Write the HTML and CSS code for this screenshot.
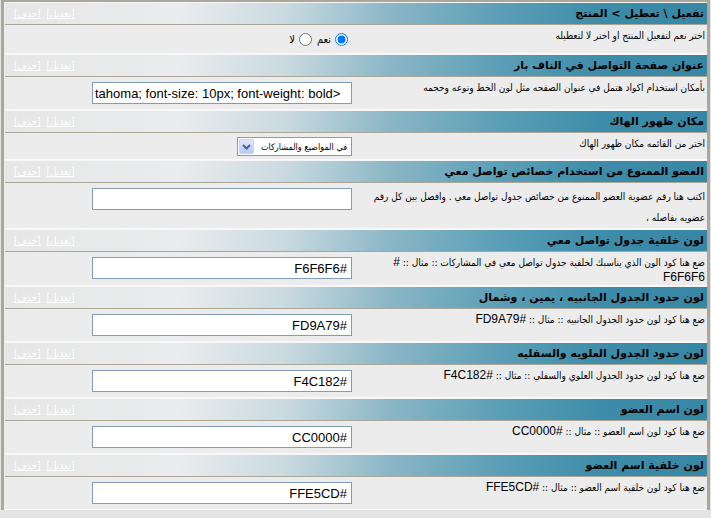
FILE: index.html
```html
<!DOCTYPE html>
<html dir="rtl">
<head>
  <meta charset="UTF-8">
  <title>إعدادات تواصل معي</title>
  <link rel="stylesheet" href="styles.css">
</head>
<body>
  <div class="panel">

    <div class="head">
      <span class="title">تفعيل \ تعطيل &gt; المنتج</span>
      <span class="tools"><a href="#">[تعديل]</a> <a href="#">[حذف]</a></span>
    </div>
    <div class="row">
      <div class="desc">اختر نعم لتفعيل المنتج او اختر لا لتعطيله</div>
      <div class="ctrl radios">
        <label class="opt"><input type="radio" name="on" checked> نعم</label>
        <label class="opt"><input type="radio" name="on"> لا</label>
      </div>
    </div>

    <div class="head">
      <span class="title">عنوان صفحة التواصل في الناف بار</span>
      <span class="tools"><a href="#">[تعديل]</a> <a href="#">[حذف]</a></span>
    </div>
    <div class="row">
      <div class="desc">بأمكان استخدام اكواد هتمل في عنوان الصفحه مثل لون الخط ونوعه وحجمه</div>
      <div class="ctrl"><input class="field ltr" type="text" value="tahoma; font-size: 10px; font-weight: bold&gt;"></div>
    </div>

    <div class="head">
      <span class="title">مكان ظهور الهاك</span>
      <span class="tools"><a href="#">[تعديل]</a> <a href="#">[حذف]</a></span>
    </div>
    <div class="row">
      <div class="desc">اختر من القائمه مكان ظهور الهاك</div>
      <div class="ctrl sel">
        <div class="select">
          <span class="sel-text">في المواضيع والمشاركات</span>
          <span class="sel-btn">
            <svg width="9" height="6" viewBox="0 0 9 6"><path d="M1 1 L4.5 4.5 L8 1" fill="none" stroke="#4d6185" stroke-width="2"/></svg>
          </span>
        </div>
      </div>
    </div>

    <div class="head">
      <span class="title">العضو الممنوع من استخدام خصائص تواصل معي</span>
      <span class="tools"><a href="#">[تعديل]</a> <a href="#">[حذف]</a></span>
    </div>
    <div class="row">
      <div class="desc tall">اكتب هنا رقم عضوية العضو الممنوع من خصائص جدول تواصل معي . وافصل بين كل رقم<br>عضويه بفاصله ،</div>
      <div class="ctrl"><input class="field" type="text" value=""></div>
    </div>

    <div class="head">
      <span class="title">لون خلفية جدول تواصل معي</span>
      <span class="tools"><a href="#">[تعديل]</a> <a href="#">[حذف]</a></span>
    </div>
    <div class="row">
      <div class="desc">ضع هنا كود الون الذي يناسبك لخلفية جدول تواصل معي في المشاركات :: مثال :: <span class="code">#</span><br><span class="code">F6F6F6</span></div>
      <div class="ctrl"><input class="field" type="text" value="#F6F6F6"></div>
    </div>

    <div class="head">
      <span class="title">لون حدود الجدول الجانبيه ، يمين ، وشمال</span>
      <span class="tools"><a href="#">[تعديل]</a> <a href="#">[حذف]</a></span>
    </div>
    <div class="row">
      <div class="desc">ضع هنا كود لون حدود الجدول الجانبيه :: مثال :: <span class="code">#FD9A79</span></div>
      <div class="ctrl"><input class="field" type="text" value="#FD9A79"></div>
    </div>

    <div class="head">
      <span class="title">لون حدود الجدول العلويه والسفليه</span>
      <span class="tools"><a href="#">[تعديل]</a> <a href="#">[حذف]</a></span>
    </div>
    <div class="row">
      <div class="desc">ضع هنا كود لون حدود الجدول العلوي والسفلي :: مثال :: <span class="code">#F4C182</span></div>
      <div class="ctrl"><input class="field" type="text" value="#F4C182"></div>
    </div>

    <div class="head">
      <span class="title">لون اسم العضو</span>
      <span class="tools"><a href="#">[تعديل]</a> <a href="#">[حذف]</a></span>
    </div>
    <div class="row">
      <div class="desc">ضع هنا كود لون اسم العضو :: مثال :: <span class="code">#CC0000</span></div>
      <div class="ctrl"><input class="field" type="text" value="#CC0000"></div>
    </div>

    <div class="head">
      <span class="title">لون خلفية اسم العضو</span>
      <span class="tools"><a href="#">[تعديل]</a> <a href="#">[حذف]</a></span>
    </div>
    <div class="row">
      <div class="desc">ضع هنا كود لون خلفية اسم العضو :: مثال :: <span class="code">#FFE5CD</span></div>
      <div class="ctrl"><input class="field" type="text" value="#FFE5CD"></div>
    </div>

  </div>
</body>
</html>
```

FILE: styles.css
```css
body {
  margin: 0;
  padding: 0;
  background: #e4e4e4;
  font-family: "DejaVu Sans Condensed", "DejaVu Sans", sans-serif;
}
.panel {
  margin: 0 1px;
  border-left: 3px solid #aaa79b;
  border-right: 3px solid #aaa79b;
  border-top: 2px solid #aaa79b;
  background: #ececec;
}
.head {
  display: flex;
  justify-content: space-between;
  align-items: center;
  height: 21px;
  padding: 0 3px 0 9px;
  border-top: 1px solid #f6f6f6;
  border-bottom: 1px solid #a9a597;
  margin-left: 1px;
  background: linear-gradient(100deg, #e6e6e6 0%, #eaeced 25%, #c9dae0 40%, #8ab6c6 55%, #5c9fb7 70%, #3d8ca9 85%, #3687a5 100%);
}
.title {
  font-family: "DejaVu Sans", sans-serif;
  font-size: 11px;
  font-weight: bold;
  color: #000;
}
.tools {
  font-size: 10px;
}
.tools a {
  color: #fff;
  margin-right: 3px;
}
.row {
  display: flex;
  padding: 0 0 0 4px;
  margin-left: 1px;
  border-bottom: 1px solid #fafafa;
}
.desc {
  width: 355px;
  box-sizing: border-box;
  padding: 3px 2px 0 0;
  font-size: 10px;
  line-height: 15px;
  color: #000;
}
.desc.tall {
  line-height: 21px;
}
.code {
  font-family: "Liberation Sans", sans-serif;
  font-size: 12px;
}
.ctrl {
  flex: 1;
  display: flex;
  align-items: flex-start;
  padding: 4px 0 5px;
}
.ctrl.radios {
  padding-right: 4px;
}
.ctrl.sel {
  padding-bottom: 3px;
}
.opt {
  display: flex;
  align-items: center;
  font-size: 11px;
  margin: 4px 0 2px 5px;
}
.opt input {
  margin: 0 0 0 4px;
  width: 13px;
  height: 13px;
}
.field {
  width: 260px;
  height: 22px;
  box-sizing: border-box;
  border: 1px solid #7f9db9;
  background: #fff;
  font-family: "Liberation Sans", sans-serif;
  font-size: 13px;
  padding: 0 4px;
  margin: 1px 0 0;
}
.field.ltr {
  direction: ltr;
  text-align: left;
  padding: 0 2px;
}
.select {
  display: flex;
  align-items: center;
  width: 115px;
  height: 19px;
  box-sizing: border-box;
  border: 1px solid #7f9db9;
  background: #fff;
}
.sel-text {
  flex: 1;
  font-size: 9px;
  padding-right: 4px;
  white-space: nowrap;
}
.sel-btn {
  flex-shrink: 0;
  display: flex;
  align-items: center;
  justify-content: center;
  width: 15px;
  height: 15px;
  margin-left: 1px;
  border-radius: 2px;
  background: linear-gradient(#dfe8fe, #b5c8f7);
  border: 1px solid #c3d3fd;
  box-sizing: border-box;
}
```
